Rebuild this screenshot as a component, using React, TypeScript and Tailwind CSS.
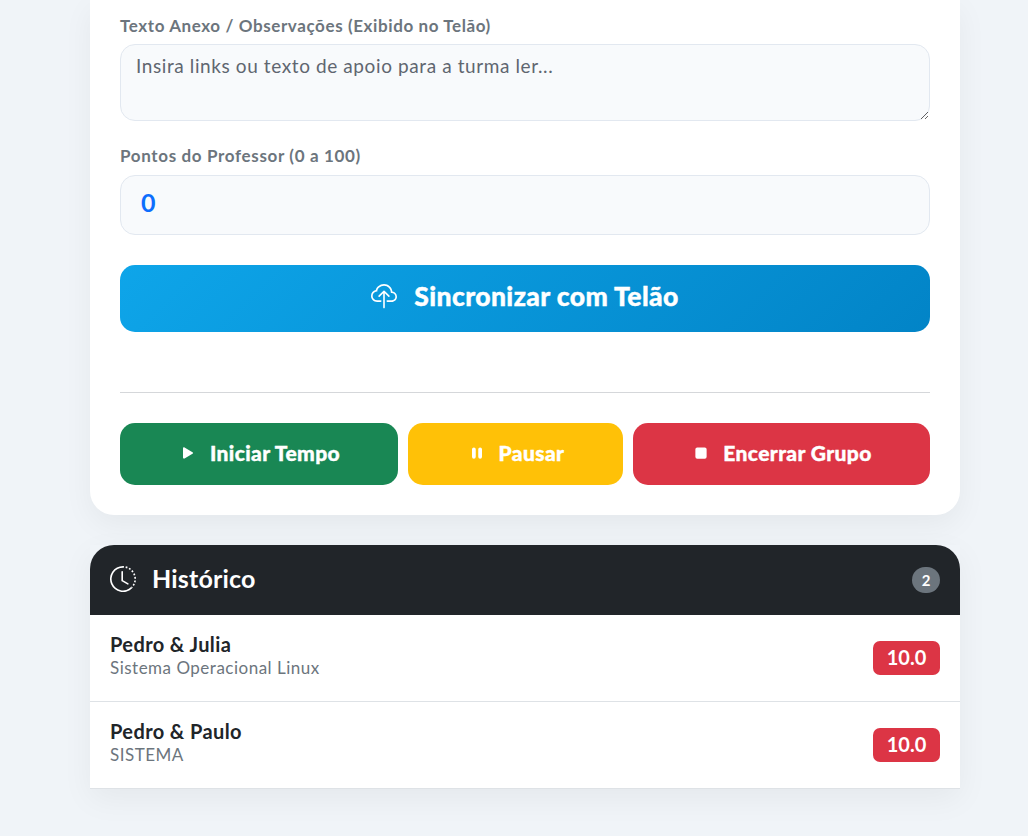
import { BsClockHistory, BsCloudUpload, BsPauseFill, BsPlayFill, BsStopFill } from "react-icons/bs";

const historico = [
  { nome: "Pedro & Julia", tema: "Sistema Operacional Linux", nota: "10.0" },
  { nome: "Pedro & Paulo", tema: "SISTEMA", nota: "10.0" },
];

export default function App() {
  return (
    <div className="h-[836px] overflow-hidden bg-[#f0f4f8] font-['Lato',sans-serif] text-[#212529]">
      <div className="ml-[90px] w-[870px]">
        <section className="rounded-b-[24px] bg-white px-[30px] pt-[15px] pb-[30px] shadow-[0_10px_30px_rgba(0,0,0,0.05)]">
          <label className="mb-[7px] block text-[17px] leading-[22px] font-bold tracking-[0.6px] text-[#6c757d]">
            Texto Anexo / Observações (Exibido no Telão)
          </label>
          <textarea
            placeholder="Insira links ou texto de apoio para a turma ler..."
            className="block h-[77px] w-full rounded-[15px] border border-[#e2e8f0] bg-[#f8fafc] px-[15px] py-[8px] text-[19px] leading-[26px] tracking-[0.6px] placeholder:text-[#5f6670]"
          />
          <label className="mt-[24px] mb-[8px] block text-[17px] leading-[22px] font-bold tracking-[0.65px] text-[#6c757d]">
            Pontos do Professor (0 a 100)
          </label>
          <input
            readOnly
            value="0"
            className="block h-[60px] w-full rounded-[15px] border border-[#e2e8f0] bg-[#f8fafc] px-[20px] pb-[7px] text-[25px] font-bold text-[#0d6efd]"
          />
          <button className="mt-[30px] flex h-[67px] w-full items-center justify-center gap-[17px] rounded-[15px] bg-[linear-gradient(135deg,#0ea5e9,#0284c7)] pb-[3px] text-[26.5px] font-black tracking-[0.4px] text-white [-webkit-text-stroke:0.4px_white]">
            <BsCloudUpload className="text-[26px]" />
            Sincronizar com Telão
          </button>
          <hr className="mt-[60px] mb-[30px] border-t border-[#d5d7da]" />
          <div className="flex gap-[10px]">
            <button className="flex h-[62px] w-[278px] items-center justify-center gap-[12px] rounded-[15px] bg-[#198754] pb-[2px] text-[21px] font-black tracking-[0.4px] text-white [-webkit-text-stroke:0.4px_white]">
              <BsPlayFill className="text-[20px]" />
              Iniciar Tempo
            </button>
            <button className="flex h-[62px] w-[215px] items-center justify-center gap-[12px] rounded-[15px] bg-[#ffc107] pb-[2px] text-[21px] font-black tracking-[0.4px] text-white [-webkit-text-stroke:0.4px_white]">
              <BsPauseFill className="text-[20px]" />
              Pausar
            </button>
            <button className="flex h-[62px] w-[297px] items-center justify-center gap-[12px] rounded-[15px] bg-[#dc3545] pb-[2px] text-[21px] font-black tracking-[0.4px] text-white [-webkit-text-stroke:0.4px_white]">
              <BsStopFill className="text-[20px]" />
              Encerrar Grupo
            </button>
          </div>
        </section>

        <section className="mt-[30px] shadow-[0_10px_30px_rgba(0,0,0,0.05)]">
          <div className="flex h-[70px] items-center justify-between rounded-t-[24px] bg-[#212529] px-[20px] text-white">
            <h2 className="flex items-center gap-[16px] pb-[2px] text-[25px] font-bold tracking-[0.2px]">
              <BsClockHistory className="text-[26px]" />
              Histórico
            </h2>
            <span className="flex h-[26px] w-[28px] items-center justify-center rounded-full bg-[#6c757d] text-[15px] font-bold">2</span>
          </div>
          {historico.map((item) => (
            <div key={item.nome} className="flex h-[87px] items-center justify-between border-b border-[#dee2e6] bg-white px-[20px]">
              <div className="pb-[5px]">
                <div className="text-[20px] leading-[24px] font-bold tracking-[0.4px]">{item.nome}</div>
                <div className="mt-[1px] text-[17px] leading-[22px] tracking-[0.5px] text-[#6c757d]">{item.tema}</div>
              </div>
              <span className="flex h-[34px] w-[67px] items-center justify-center rounded-[7px] bg-[#dc3545] pb-[2px] text-[20px] font-bold text-white">
                {item.nota}
              </span>
            </div>
          ))}
        </section>
      </div>
    </div>
  );
}
